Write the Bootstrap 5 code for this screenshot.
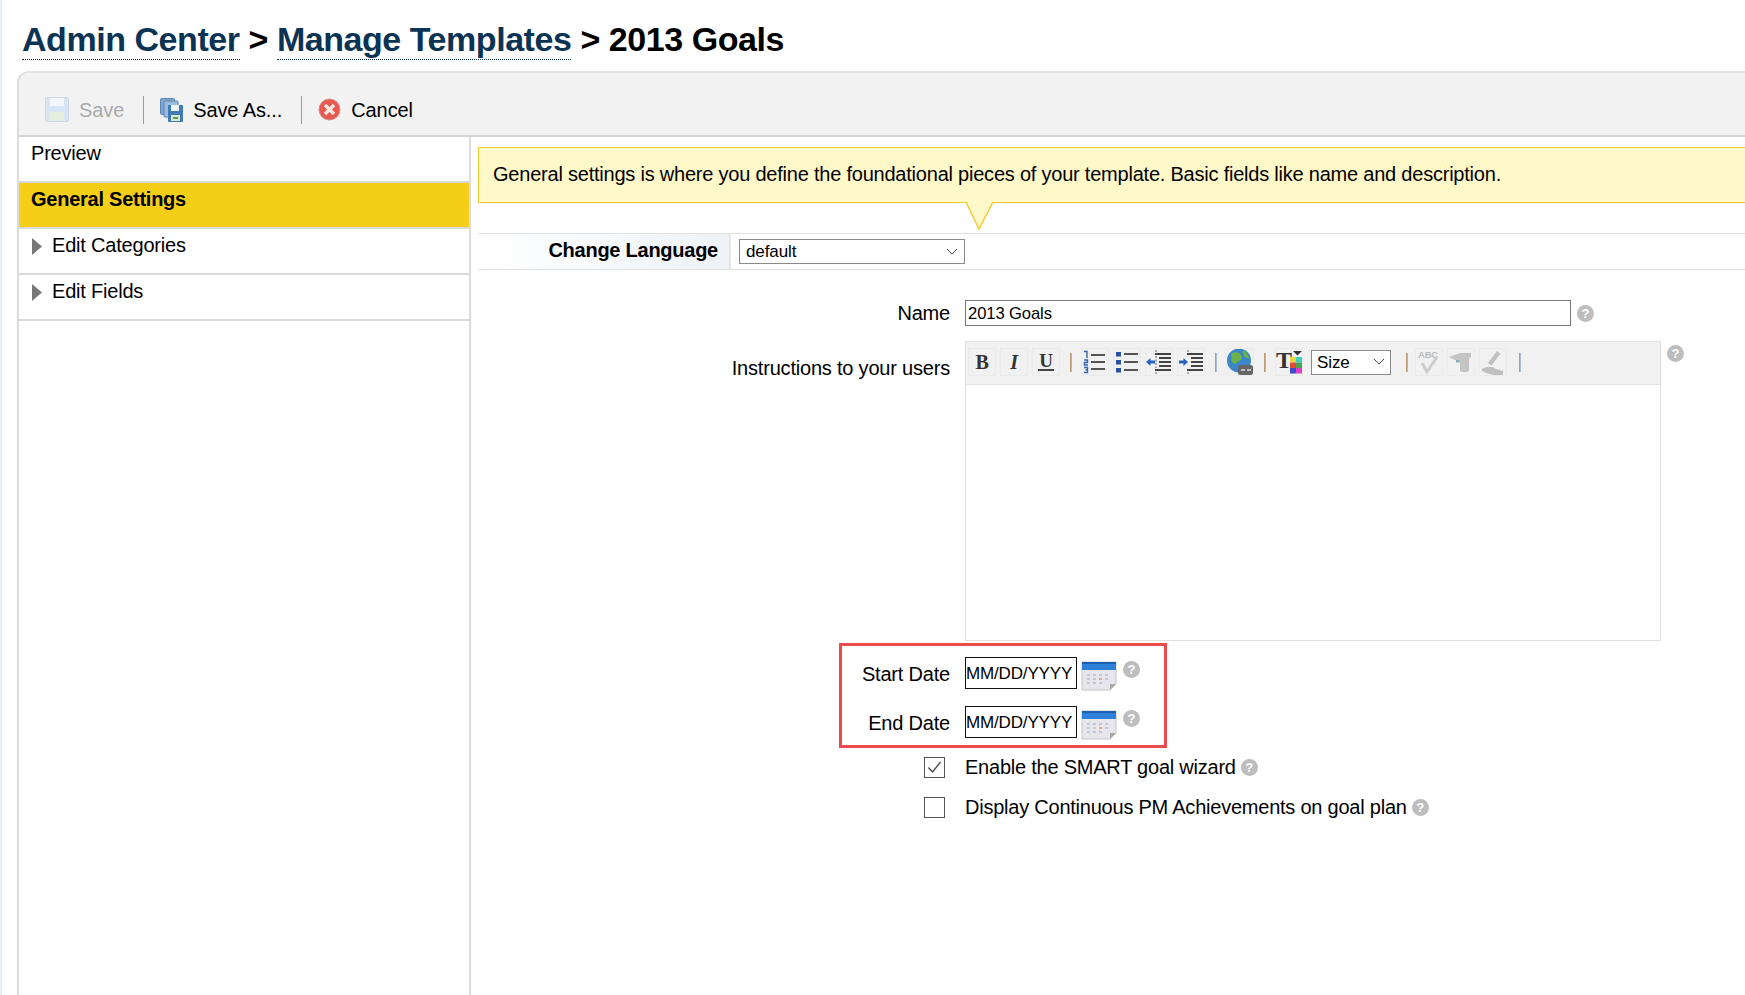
<!DOCTYPE html>
<html lang="en"><head><meta charset="utf-8"><title>2013 Goals</title>
<link href="https://cdn.jsdelivr.net/npm/bootstrap@5.3.0/dist/css/bootstrap.min.css" rel="stylesheet">
<style>
html,body{height:995px;overflow:hidden}
body{font-family:"Liberation Sans",Arial,sans-serif;font-size:20px;color:#000;background:#fff;border-left:2px solid #e3eef8;letter-spacing:-.2px}
.page-title{font-size:34px;font-weight:700;line-height:40px;margin:0;padding:19px 0 0 20px;height:71px;letter-spacing:-.45px}
.page-title a{color:#0b3354;text-decoration:none;border-bottom:1px dotted #0b3354;display:inline-block;line-height:39px}
.shell{margin-left:15px;height:924px;border-left:2px solid #dcdcdc;border-top:2px solid #e2e2e2;border-top-left-radius:12px;overflow:hidden}
.tools{height:64px;background:#f2f2f2;border-bottom:2px solid #d4d4d4;padding:11px 0 0 26px;letter-spacing:-.1px;flex:none}
.tool{line-height:36px;margin-right:19px}
.tool svg{margin-right:10px}
.tool-off{color:#aaa}
.vsep{width:1px;height:28px;background:#9a9a9a;margin-right:16px}
.side{width:452px;border-right:2px solid #dcdcdc;flex:none}
.side-item{height:46px;border-bottom:2px solid #d9d9d9;padding:4px 12px;line-height:24px}
.side-on{background:#f5cf17;font-weight:700;letter-spacing:-.25px}
.side-item svg{margin-right:9px;vertical-align:-4px}
.main{padding:10px 0 0 7px;min-width:0}
.tip{height:56px;background:#fff8c9;border:1px solid #f0c92d;border-right:0;padding:0 14px;line-height:52px;white-space:nowrap;letter-spacing:-.22px}
.tip-tail{display:block;margin-left:487px;margin-top:-1px;height:28px;margin-bottom:-27px}
.lang{margin-top:30px;height:37px;border-top:1px solid #e2e2e2;border-bottom:1px solid #e2e2e2}
.lang-label{width:253px;background:linear-gradient(90deg,#fff,#eef2f6);font-weight:700;text-align:right;padding-right:11px;line-height:32px;letter-spacing:-.25px;border-right:2px solid #e6e6e6;margin-right:8px}
.fake-select{background:#fff;border:1px solid #8a8a8a;font-size:17px;padding:0 6px;line-height:24px;height:25px;margin-top:5px;letter-spacing:-.1px}
.lang-select{width:226px}
.row-label{width:487px;text-align:right;flex:none;padding-right:15px}
.row-label-top{padding-top:12px}
.name-row{margin-top:30px;height:26px}
.name-box{width:606px;height:26px;border:1px solid #777;font-size:16.6px;line-height:26px;padding-left:2px;letter-spacing:-.1px}
.help{width:17px;height:17px;border-radius:50%;background:#bdbdbd;color:#fff;font-size:13px;font-weight:700;line-height:17px;text-align:center;flex:none;display:inline-block;letter-spacing:0}
.help-name{margin-left:6px}
.help-ed{margin:4px 0 0 6px}
.help-date{margin:4px 0 0 6px}
.help-first{margin-left:5px}
.help-next{margin-left:5px}
.editor{width:696px;height:300px;border:1px solid #e0e0e0}
.ed-bar{height:43px;background:#f1f1f1;border-bottom:1px solid #e4e4e4;padding:0 0 2px 2px}
.ed-btn{width:28px;height:28px;margin-right:4px;flex:none;outline:1px solid #ebebeb;outline-offset:-1px}
.ed-sep{width:1px;height:19px;background:#c09a72;box-shadow:1px 0 0 #a9bad4;margin:0 10px 0 6px;flex:none}
.ed-sep-tail{margin-left:8px}
.ed-sep-size{margin-right:8px}
.ed-font-icon{margin-right:8px}
.ed-letter{font-family:"Liberation Serif",serif;font-weight:700;fill:#333}
.size-select{width:80px;height:25px;background:#fff;border:1px solid #8a8a8a;font-size:17px;line-height:23px;padding:0 5px;margin-right:15px;flex:none;letter-spacing:-.1px}
.ins-row{margin-top:15px}
.red-frame{border:3px solid #ea4b4b;width:328px;height:105px;margin:2px 0 0 361px;padding:11px 0 0 0}
.date-row{height:32px;margin-bottom:17px}
.date-label{width:124px;text-align:right;padding-right:15px;flex:none;line-height:34px;margin-left:-1px}
.date-box{width:112px;height:32px;border:1px solid #111;font-size:17px;line-height:32px;white-space:nowrap;letter-spacing:-.15px;overflow:hidden}
.cal-icon{margin:4px 0 0 4px;flex:none}
.check-row{height:24px;padding-left:446px;line-height:24px}
.check-first{margin-top:7px}
.check-next{margin-top:16px}
.box{width:21px;height:21px;border:1px solid #555;background:#fff;flex:none;margin-right:20px}
.check-text{letter-spacing:-.23px}
</style></head><body>
<h1 class="page-title"><a href="#">Admin Center</a> &gt; <a href="#">Manage Templates</a> &gt; 2013 Goals</h1>
<div class="shell d-flex flex-column">
<div class="tools d-flex align-items-center">
 <span class="tool tool-off d-flex align-items-center"><svg width="24" height="25" viewBox="0 0 24 25"><rect x=".5" y=".5" width="23" height="24" rx="2" fill="#d8e5f2" stroke="#c9d8e8"/><rect x="5" y="1" width="14" height="8" fill="#f3f7fb"/><rect x="5" y="15" width="14" height="9" fill="#e3eedd"/></svg>Save</span>
 <span class="vsep"></span>
 <span class="tool d-flex align-items-center"><svg width="23" height="24" viewBox="0 0 23 24"><rect x=".5" y=".5" width="14" height="16" rx="1" fill="#7ea6cf" stroke="#5d86b2"/><rect x="4" y="3" width="14" height="16" rx="1" fill="#9abde0" stroke="#5d86b2"/><rect x="8" y="7" width="15" height="17" rx="1" fill="#3f7bb5"/><rect x="11" y="7" width="8" height="6" fill="#eef3f8"/><rect x="11" y="17" width="9" height="6" fill="#dfe8d0"/><rect x="13" y="19" width="5" height="2" fill="#58a04a"/></svg>Save As...</span>
 <span class="vsep"></span>
 <span class="tool d-flex align-items-center"><svg width="23" height="23" viewBox="0 0 23 23"><circle cx="11.5" cy="11.5" r="10.5" fill="#e85a50" stroke="#cf8f88"/><path d="M7 7l9 9M16 7l-9 9" stroke="#fbe7e4" stroke-width="3.4"/></svg>Cancel</span>
</div>
<div class="d-flex flex-grow-1">
 <div class="side">
  <div class="side-item">Preview</div>
  <div class="side-item side-on">General Settings</div>
  <div class="side-item"><svg width="12" height="19" viewBox="0 0 12 19"><path d="M1 1l10 8.500L1 18z" fill="#777"/></svg>Edit Categories</div>
  <div class="side-item"><svg width="12" height="19" viewBox="0 0 12 19"><path d="M1 1l10 8.500L1 18z" fill="#777"/></svg>Edit Fields</div>
 </div>
 <div class="main flex-grow-1">
  <div class="tip">General settings is where you define the foundational pieces of your template. Basic fields like name and description.</div>
  <svg class="tip-tail" width="30" height="28" viewBox="0 0 30 28"><path d="M1 0L14 27 28 0" fill="#fff8c9" stroke="#f0c92d" stroke-width="1.4"/></svg>
  <div class="lang d-flex">
   <div class="lang-label">Change Language</div>
   <div class="fake-select lang-select d-flex justify-content-between align-items-center">default<svg width="12" height="8" viewBox="0 0 12 8"><path d="M1 1l5 5 5-5" fill="none" stroke="#444"/></svg></div>
  </div>
  <div class="name-row d-flex align-items-center">
   <div class="row-label">Name</div>
   <div class="name-box">2013 Goals</div>
   <span class="help help-name">?</span>
  </div>
  <div class="ins-row d-flex">
   <div class="row-label row-label-top">Instructions to your users</div>
   <div class="editor">
    <div class="ed-bar d-flex align-items-center">
     <svg class="ed-btn" viewBox="0 0 28 28"><text x="14" y="21" text-anchor="middle" font-size="20" class="ed-letter">B</text></svg>
     <svg class="ed-btn" viewBox="0 0 28 28"><text x="14" y="21" text-anchor="middle" font-size="20" font-style="italic" class="ed-letter">I</text></svg>
     <svg class="ed-btn" viewBox="0 0 28 28"><text x="14" y="19" text-anchor="middle" font-size="19" class="ed-letter">U</text><rect x="6" y="21" width="16" height="2" fill="#444"/></svg>
     <span class="ed-sep"></span>
     <svg class="ed-btn" viewBox="0 0 28 28"><path d="M3 3.500h3V10M3 12h3.500v2.500h-3v2.500h3.500M3 19.500h3.500v2.300H4.500M6.500 21.800v2.700H3" fill="none" stroke="#36a" stroke-width="1.400"/><path d="M10 7h14M10 14h14M10 21h14" stroke="#555" stroke-width="1.800"/></svg>
     <svg class="ed-btn" viewBox="0 0 28 28"><rect x="3" y="4" width="5" height="4.500" fill="#2b4fa8"/><rect x="3" y="12" width="5" height="4.500" fill="#2b4fa8"/><rect x="3" y="20" width="5" height="4.500" fill="#2b4fa8"/><path d="M11 6h14M11 14h14M11 22h14" stroke="#555" stroke-width="1.800"/></svg>
     <svg class="ed-btn" viewBox="0 0 28 28"><path d="M10 6h16M14 10h12M14 14h12M14 18h12M10 22h16" stroke="#444" stroke-width="1.900"/><path d="M11 2v2M11 24v3M11 8v12" stroke="#666" stroke-dasharray="2 1.500"/><path d="M1 14l4.500-4v2.500H10v3H5.500V18z" fill="#2a62c0"/></svg>
     <svg class="ed-btn" viewBox="0 0 28 28"><path d="M10 6h16M14 10h12M14 14h12M14 18h12M10 22h16" stroke="#444" stroke-width="1.900"/><path d="M11 2v2M11 24v3" stroke="#666" stroke-dasharray="2 1.500"/><path d="M11 14L6.500 10v2.500H2v3h4.500V18z" fill="#2a62c0"/></svg>
     <span class="ed-sep"></span>
     <svg class="ed-btn" viewBox="0 0 28 28"><circle cx="13" cy="12.500" r="12" fill="#3a86c8"/><path d="M5 6c4-3 8-2 10 1s1 5-2 6-3 5-6 2-1-6-2-9zM17 2c3 1 6 5 6 9l-4-2c-2-1-3-5-2-7z" fill="#6cb04a"/><rect x="12" y="17" width="15" height="10" rx="2.500" fill="#666"/><path d="M15 22h4M21 22h4" stroke="#ddd" stroke-width="1.600"/></svg>
     <span class="ed-sep"></span>
     <svg class="ed-btn ed-font-icon" viewBox="0 0 28 28"><text x="9" y="20" text-anchor="middle" font-size="24" class="ed-letter">T</text><path d="M18 3h9l-4.500 4.500z" fill="#333"/><rect x="15" y="9" width="6" height="5.500" fill="#e6d83a"/><rect x="21" y="9" width="6" height="5.500" fill="#3cd0c0"/><rect x="15" y="14.500" width="6" height="5.500" fill="#e24a3a"/><rect x="21" y="14.500" width="6" height="5.500" fill="#4aa050"/><rect x="15" y="20" width="6" height="5.500" fill="#3a4ac8"/><rect x="21" y="20" width="6" height="5.500" fill="#e040c0"/></svg>
     <div class="size-select d-flex justify-content-between align-items-center">Size<svg width="12" height="8" viewBox="0 0 12 8"><path d="M1 1l5 5 5-5" fill="none" stroke="#444"/></svg></div>
     <span class="ed-sep ed-sep-size ms-0"></span>
     <svg class="ed-btn" viewBox="0 0 28 28"><text x="3" y="10" font-size="9.500" font-weight="700" fill="#bbb" font-family="Liberation Sans">ABC</text><path d="M7 15l5 9 10-15" fill="none" stroke="#ccc" stroke-width="2.800"/></svg>
     <svg class="ed-btn" viewBox="0 0 28 28"><path d="M2 9l11-4h11v4l-2 1v13c-3 2-8 1-9 0v-8l-3-2z" fill="#c4c4c4"/><rect x="9" y="12" width="3.500" height="2.500" fill="#8ab"/></svg>
     <svg class="ed-btn" viewBox="0 0 28 28"><path d="M9 15L18 3l3.500 2.500-9 12zM3 21c5-3 10-3 14 0l7 2v4c-7 1-13 0-21-4z" fill="#c0c0c0"/></svg>
     <span class="ed-sep ed-sep-tail"></span>
    </div>
   </div>
   <span class="help help-ed">?</span>
  </div>
  <div class="red-frame">
   <div class="date-row d-flex">
    <div class="date-label">Start Date</div>
    <div class="date-box">MM/DD/YYYY</div>
    <svg class="cal-icon" width="36" height="30" viewBox="0 0 36 30"><use href="#cal"/></svg>
    <span class="help help-date">?</span>
   </div>
   <div class="date-row d-flex">
    <div class="date-label">End Date</div>
    <div class="date-box">MM/DD/YYYY</div>
    <svg class="cal-icon" width="36" height="30" viewBox="0 0 36 30"><use href="#cal"/></svg>
    <span class="help help-date">?</span>
   </div>
  </div>
  <div class="check-row check-first d-flex align-items-center">
   <span class="box d-flex align-items-center justify-content-center"><svg width="15" height="13" viewBox="0 0 15 13"><path d="M1.500 6.500l4 4.500 8-10" fill="none" stroke="#444" stroke-width="1.300"/></svg></span>
   <span class="check-text">Enable the SMART goal wizard</span><span class="help help-first">?</span>
  </div>
  <div class="check-row check-next d-flex align-items-center">
   <span class="box"></span>
   <span class="check-text">Display Continuous PM Achievements on goal plan</span><span class="help help-next">?</span>
  </div>
 </div>
</div>
</div>
<svg width="0" height="0" class="d-block" aria-hidden="true"><defs><g id="cal"><path d="M1 1h34v22l-6 6H1z" fill="#e6e6ec" stroke="#c4c4cc"/><rect x="1" y="1" width="34" height="8" fill="#2f80d8"/><rect x="1" y="1" width="34" height="2" fill="#1a5fb0"/><path d="M6 14h3M12 14h3M18 14h3M24 14h3M6 18h3M12 18h3M18 18h3M24 18h3M6 22h3M12 22h3M18 22h3" stroke="#c3c8d4" stroke-width="2"/><rect x="18" y="17" width="3" height="2" fill="#e7a594"/><path d="M29 29l6-6h-6z" fill="#aaa"/></g></defs></svg>
</body></html>
